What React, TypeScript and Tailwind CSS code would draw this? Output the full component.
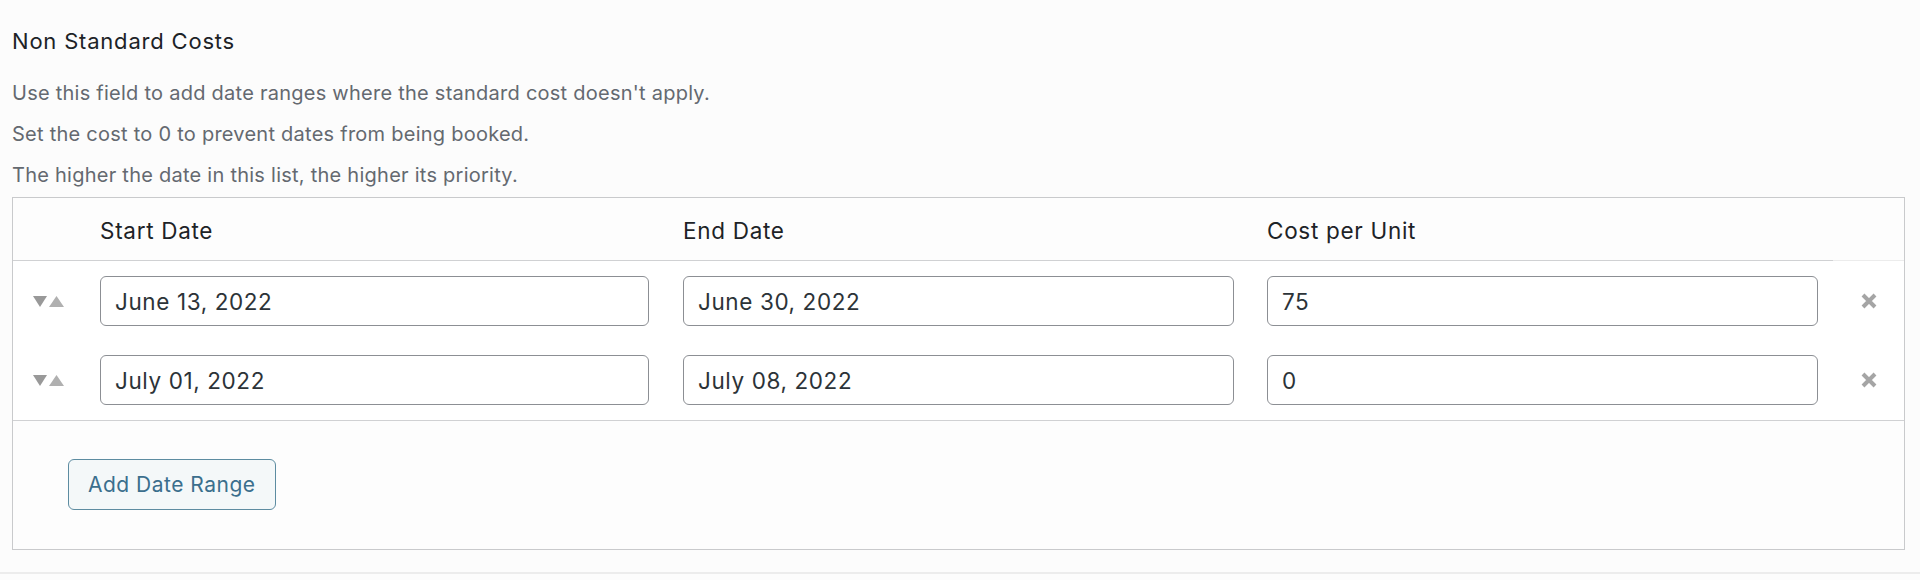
import React from "react";

const font = "font-['Inter','Liberation_Sans',sans-serif]";

function Arrows() {
  return (
    <div className="ml-[20px] flex items-center gap-[2px]">
      <svg width="14" height="11" viewBox="0 0 14 11">
        <polygon points="0,0 14,0 7,11" fill="#999999" />
      </svg>
      <svg width="15" height="11" viewBox="0 0 15 11">
        <polygon points="0,11 15,11 7.5,0" fill="#b0b0b0" />
      </svg>
    </div>
  );
}

function Remove() {
  return (
    <div className="ml-[42px] flex items-center">
      <svg width="18" height="18" viewBox="0 0 18 18">
        <path d="M3 3 L15 15 M15 3 L3 15" stroke="#a5a5a5" strokeWidth="4" strokeLinecap="butt" />
      </svg>
    </div>
  );
}

function Field({ value, w }: { value: string; w: string }) {
  return (
    <input
      readOnly
      value={value}
      className={`${w} h-[50px] rounded-[6px] border border-[#8c8f94] bg-white pl-[14px] text-[22.5px] tracking-[0.6px] text-[#2c3338] outline-none ${font}`}
    />
  );
}

function Row({ a, b, c }: { a: string; b: string; c: string }) {
  return (
    <div className="grid grid-cols-[87px_583px_584px_551px_1fr] items-center">
      <Arrows />
      <Field value={a} w="w-[549px]" />
      <Field value={b} w="w-[551px]" />
      <Field value={c} w="w-[551px]" />
      <Remove />
    </div>
  );
}

export default function App() {
  return (
    <div className={`w-[1920px] h-[580px] bg-[#fcfcfc] ${font} overflow-hidden`}>
      <div className="pt-[27px] pl-[12px] pr-[15px]">
        <h3 className="h-[28px] text-[22px] tracking-[0.8px] leading-[28px] text-[#1d2327] font-normal">
          Non Standard Costs
        </h3>
        <div className="mt-[18px] text-[20px] tracking-[0.25px] leading-[41px] text-[#646970]">
          <p>Use this field to add date ranges where the standard cost doesn't apply.</p>
          <p>Set the cost to 0 to prevent dates from being booked.</p>
          <p>The higher the date in this list, the higher its priority.</p>
        </div>
        <div className="mt-[1px] border border-[#c9cacc] bg-[#fdfdfd]">
          <div className="grid grid-cols-[87px_583px_584px_551px_1fr] h-[62px] items-center pt-[3px] text-[22.5px] tracking-[0.7px] text-[#1d2327]">
            <div />
            <div>Start Date</div>
            <div>End Date</div>
            <div>Cost per Unit</div>
            <div />
          </div>
          <div className="flex h-[1px]">
            <div className="w-[1820px] bg-[#d0d1d3]" />
            <div className="flex-1 bg-[#ececec]" />
          </div>
          <div className="flex flex-col gap-[29px] pt-[15px] pb-[15px] bg-white">
            <Row a="June 13, 2022" b="June 30, 2022" c="75" />
            <Row a="July 01, 2022" b="July 08, 2022" c="0" />
          </div>
          <div className="h-[1px] bg-[#d0d1d3]" />
          <div className="h-[128px] pt-[38px] pl-[55px]">
            <button className="h-[51px] w-[208px] rounded-[6px] border border-[#5d8ca1] bg-[#f4f8f9] text-[21px] tracking-[0.5px] text-[#3b6f8d] text-left pl-[19px]">
              Add Date Range
            </button>
          </div>
        </div>
      </div>
      <div className="mt-[22px] h-[2px] bg-[#ececec]" />
    </div>
  );
}
